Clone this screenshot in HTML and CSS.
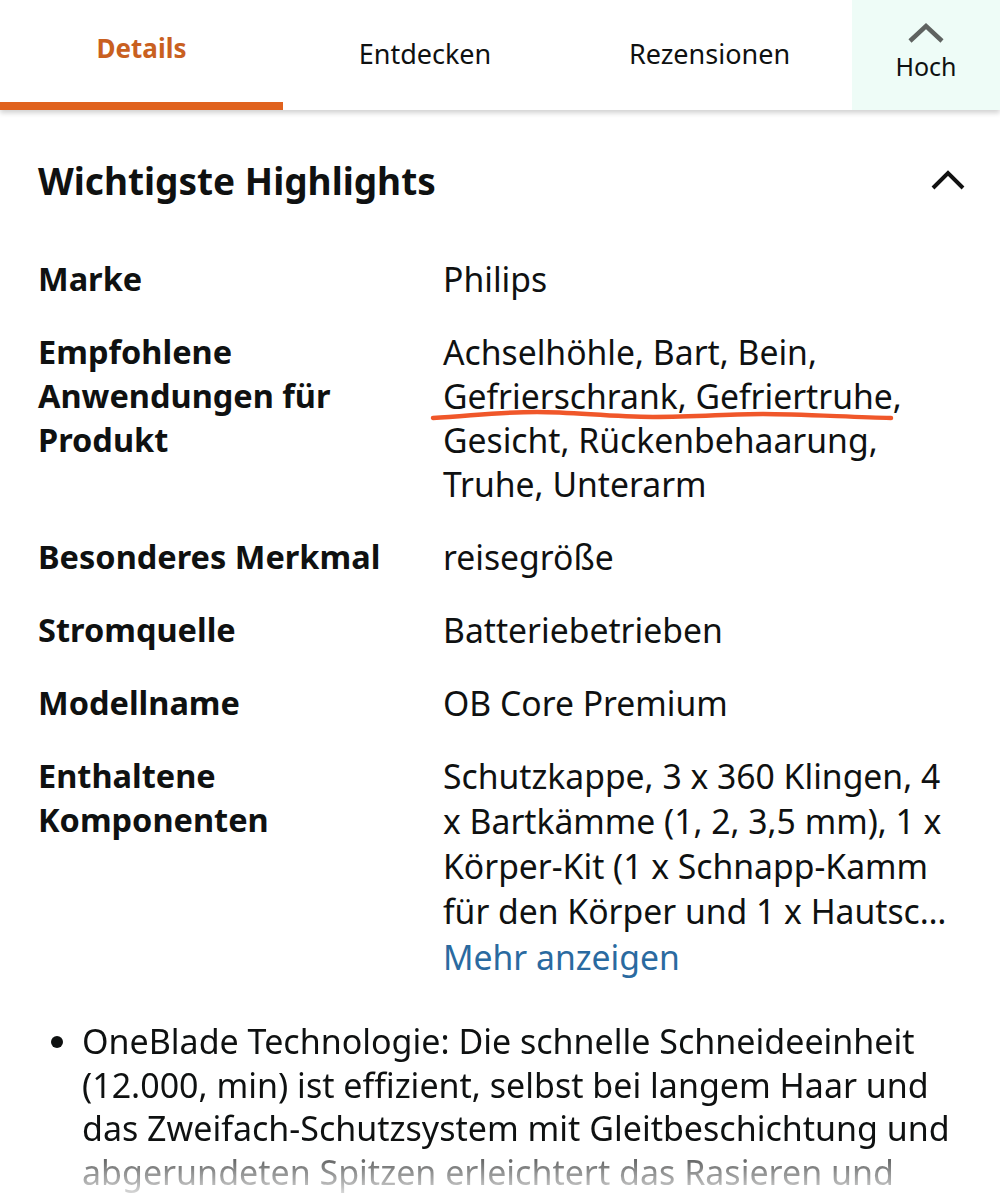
FILE: index.html
```html
<!DOCTYPE html>
<html lang="de">
<head>
<meta charset="utf-8">
<link rel="stylesheet" href="styles.css">
</head>
<body>
<nav class="tabs">
  <div class="tab active">Details</div>
  <div class="tab">Entdecken</div>
  <div class="tab">Rezensionen</div>
  <div class="tab up">
    <svg class="up-icon" width="40" height="24" viewBox="0 0 40 24"><path d="M4 20 L20 5 L36 20" fill="none" stroke="#5f6361" stroke-width="4.5"/></svg>
    <span>Hoch</span>
  </div>
</nav>

<section class="highlights">
  <header class="hl-head">
    <h2>Wichtigste Highlights</h2>
    <svg width="36" height="22" viewBox="0 0 36 22"><path d="M3 19 L18 4 L33 19" fill="none" stroke="#111" stroke-width="4"/></svg>
  </header>

  <div class="spec">
    <div class="label">Marke</div>
    <div class="value">Philips</div>

    <div class="label">Empfohlene Anwendungen für Produkt</div>
    <div class="value">Achselhöhle, Bart, Bein, Gefrierschrank, Gefriertruhe, Gesicht, Rückenbehaarung, Truhe, Unterarm
      <svg class="scribble" width="470" height="24" viewBox="0 0 470 24"><path d="M3 14 C 40 12, 70 8, 107 8 S 180 13, 223 13 S 300 10, 333 10 S 420 13, 461 14" fill="none" stroke="#f0572a" stroke-width="4.5" stroke-linecap="round"/></svg>
    </div>

    <div class="label">Besonderes Merkmal</div>
    <div class="value">reisegröße</div>

    <div class="label">Stromquelle</div>
    <div class="value">Batteriebetrieben</div>

    <div class="label">Modellname</div>
    <div class="value">OB Core Premium</div>

    <div class="label">Enthaltene Komponenten</div>
    <div class="value">
      <div class="long">Schutzkappe, 3 x 360 Klingen, 4 x Bartkämme (1, 2, 3,5 mm), 1 x Körper-Kit (1 x Schnapp-Kamm für den Körper und 1 x Hautsc…</div>
      <a class="more">Mehr anzeigen</a>
    </div>
  </div>

  <ul class="bullets">
    <li>OneBlade Technologie: Die schnelle Schneideeinheit (12.000, min) ist effizient, selbst bei langem Haar und das Zweifach-Schutzsystem mit Gleitbeschichtung und abgerundeten Spitzen erleichtert das Rasieren und sorgt für Komfort.</li>
  </ul>
</section>
</body>
</html>
```

FILE: styles.css
```css
html, body {
  margin: 0;
  padding: 0;
  background: #fff;
}
body {
  width: 1000px;
  height: 1200px;
  overflow: hidden;
  font-family: "Noto Sans", "Open Sans", sans-serif;
  color: #0f1111;
}
.tabs {
  display: grid;
  grid-template-columns: 283px 284px 285px 148px;
  height: 110px;
  box-shadow: 0 3px 5px rgba(0,0,0,0.18);
  position: relative;
  z-index: 1;
}
.tab {
  display: flex;
  justify-content: center;
  align-items: center;
  font-size: 27px;
  padding-bottom: 4px;
  box-sizing: border-box;
}
.tab.active {
  color: #c9601f;
  font-weight: 700;
  font-size: 26px;
  border-bottom: 8px solid #e0621e;
  padding-bottom: 6px;
}
.tab.up {
  background: #eefcf7;
  flex-direction: column;
  gap: 4px;
  font-size: 25px;
  padding-bottom: 6px;
}
.up-icon { display: block; }

.highlights {
  padding: 0 34px 0 38px;
}
.hl-head {
  display: flex;
  justify-content: space-between;
  align-items: center;
  height: 140px;
}
.hl-head h2 {
  margin: 0;
  font-size: 37px;
  font-weight: 700;
}
.spec {
  display: grid;
  grid-template-columns: 405px 1fr;
  row-gap: 29px;
  margin-top: 7px;
  font-size: 33.7px;
  line-height: 44px;
}
.label {
  font-weight: 700;
  font-size: 32.5px;
  padding-right: 20px;
}
.value { position: relative; }
.long { line-height: 45px; }
.more {
  color: #2a6aa0;
  display: block;
  line-height: 46px;
}
.scribble {
  position: absolute;
  left: -13px;
  top: 74px;
}
.bullets {
  margin: 40px 0 0;
  padding-left: 44px;
  font-size: 34px;
  line-height: 43.5px;
  max-height: 178px;
  overflow: hidden;
  -webkit-mask-image: linear-gradient(to bottom, #000 128px, rgba(0,0,0,0.68) 137px, rgba(0,0,0,0.1) 178px);
          mask-image: linear-gradient(to bottom, #000 128px, rgba(0,0,0,0.68) 137px, rgba(0,0,0,0.1) 178px);
}
```
